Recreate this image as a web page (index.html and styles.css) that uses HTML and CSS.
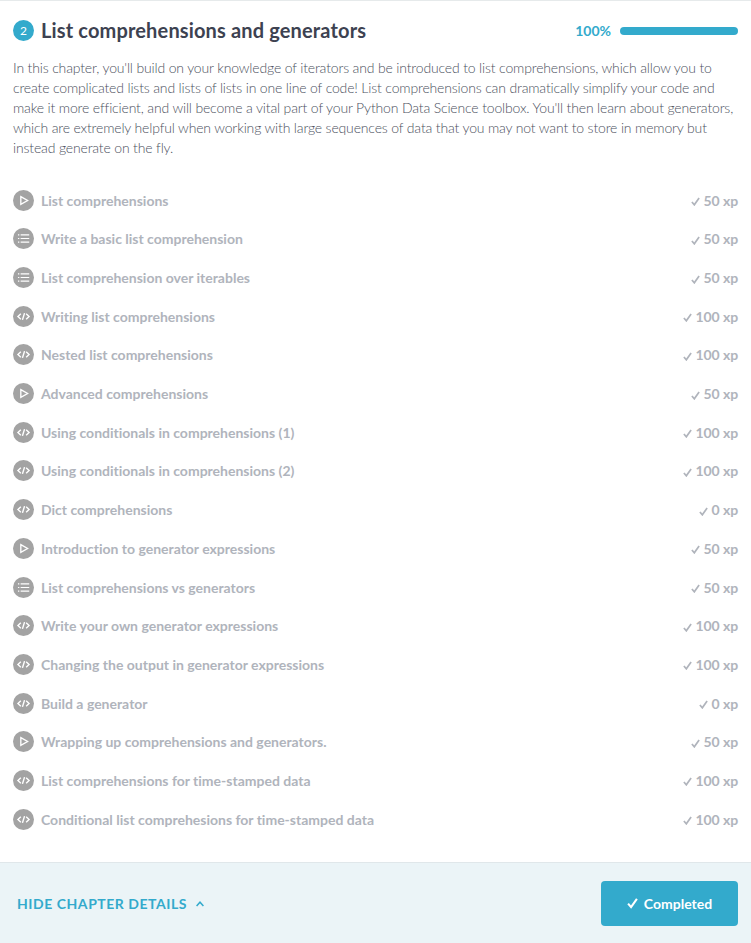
FILE: index.html
```html
<!DOCTYPE html>
<html lang="en">
<head>
<meta charset="utf-8">
<title>List comprehensions and generators</title>
<link rel="stylesheet" href="styles.css">
</head>
<body>
<svg width="0" height="0" class="defs">
  <symbol id="play" viewBox="0 0 22 22"><circle cx="11" cy="11" r="11" fill="#a3a3a3"/><path d="M8.200 6.900L15.300 11l-7.100 4.100z" fill="none" stroke="#fff" stroke-width="1.400"/></symbol>
  <symbol id="list" viewBox="0 0 22 22"><circle cx="11" cy="11" r="11" fill="#a3a3a3"/><path d="M5.200 7.200h1.400M8 7.200h9M5.200 11h1.400M8 11h9M5.200 14.800h1.400M8 14.800h9" stroke="#fff" stroke-width="1.300"/></symbol>
  <symbol id="code" viewBox="0 0 22 22"><circle cx="11" cy="11" r="11" fill="#a3a3a3"/><path d="M8.200 8.200L5.200 11l3 2.800M13.800 8.200l3 2.800-3 2.800M12.100 7.500l-2.200 7" fill="none" stroke="#fff" stroke-width="1.500"/></symbol>
  <symbol id="check" viewBox="0 0 10 10"><path d="M1 5.500l2.700 3.200L9 1.200" fill="none" stroke="currentColor" stroke-width="1.900"/></symbol>
</svg>
<main class="chapter">
  <header class="head"><span class="number">2</span><h1>List comprehensions and generators</h1><span class="percent">100%</span><div class="progress"></div></header>
  <p class="description">In this chapter, you'll build on your knowledge of iterators and be introduced to list comprehensions, which allow you to<br>create complicated lists and lists of lists in one line of code! List comprehensions can dramatically simplify your code and<br>make it more efficient, and will become a vital part of your Python Data Science toolbox. You'll then learn about generators,<br>which are extremely helpful when working with large sequences of data that you may not want to store in memory but<br>instead generate on the fly.</p>
  <ul class="lessons" id="lessons"></ul>
</main>
<footer class="footer"><a class="toggle">HIDE CHAPTER DETAILS<svg viewBox="0 0 8 6"><path d="M.6 5L4 1.200 7.400 5" fill="none" stroke="currentColor" stroke-width="1.500"/></svg></a><button class="done"><svg><use href="#check"/></svg>Completed</button></footer>
<script src="lessons.js"></script>
</body>
</html>
```
FILE: styles.css
```css
*{box-sizing:border-box}
body{margin:0;height:943px;display:flex;flex-direction:column;font-family:Lato,sans-serif;background:#fff;border-top:1px solid #e6eaeb}
.defs{display:none}
.chapter{flex:1;padding:17px 13px 0}
.head{display:flex;align-items:center;height:24px}
.number{width:21px;height:21px;border-radius:50%;background:#33aacc;color:#fff;font-size:12px;line-height:21px;text-align:center}
h1{margin:0 auto 0 7px;font-size:20px;line-height:24px;font-weight:700;letter-spacing:.15px;color:#3d4251}
.percent{font-size:14px;font-weight:700;color:#3ac}
.progress{width:118px;height:8px;border-radius:4px;background:#3ac;margin:2px 0 0 9px}
.description{margin:16px 0 0;font-size:14px;line-height:20px;font-weight:300;letter-spacing:-.155px;font-variant-ligatures:common-ligatures;color:#4c5160;white-space:nowrap}
.lessons{list-style:none;margin:22.800px 0 0;padding:0}
.lesson{display:flex;align-items:center;height:38.700px;font-size:14px;font-weight:700;font-variant-ligatures:none;color:#b0b4bc}
.lesson .kind{width:21px;height:21px;margin-right:7px}
.lesson .xp{margin-left:auto;letter-spacing:-.1px}
.lesson .check{width:9px;height:9px;margin-right:3.500px;vertical-align:-.5px}
.footer{height:81px;background:#ebf4f7;border-top:1px solid #e0e7ea;padding:0 13px 0 17px;display:flex;align-items:center;justify-content:space-between}
.toggle{font-size:14px;font-weight:700;color:#3ac;letter-spacing:.54px}
.toggle svg{width:8px;height:6px;margin-left:9px;vertical-align:2px}
.done{width:137px;height:45px;border:0;border-radius:4px;background:#3ac;color:#fff;font:700 14px Lato,sans-serif;display:flex;align-items:center;justify-content:center}
.done svg{width:11px;height:12px;margin-right:6px}
```
FILE: lessons.js
```js
const lessons = [
  ["play", "List comprehensions", 50],
  ["list", "Write a basic list comprehension", 50],
  ["list", "List comprehension over iterables", 50],
  ["code", "Writing list comprehensions", 100],
  ["code", "Nested list comprehensions", 100],
  ["play", "Advanced comprehensions", 50],
  ["code", "Using conditionals in comprehensions (1)", 100],
  ["code", "Using conditionals in comprehensions (2)", 100],
  ["code", "Dict comprehensions", 0],
  ["play", "Introduction to generator expressions", 50],
  ["list", "List comprehensions vs generators", 50],
  ["code", "Write your own generator expressions", 100],
  ["code", "Changing the output in generator expressions", 100],
  ["code", "Build a generator", 0],
  ["play", "Wrapping up comprehensions and generators.", 50],
  ["code", "List comprehensions for time-stamped data", 100],
  ["code", "Conditional list comprehesions for time-stamped data", 100]
];
document.getElementById("lessons").innerHTML = lessons.map(([kind, title, xp]) =>
  `<li class="lesson"><svg class="kind"><use href="#${kind}"/></svg><span>${title}</span><span class="xp"><svg class="check"><use href="#check"/></svg>${xp} xp</span></li>`
).join("");
```
